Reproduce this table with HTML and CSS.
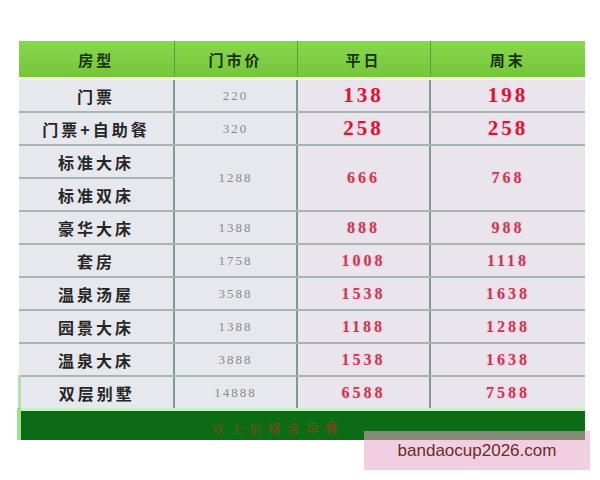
FILE: index.html
```html
<!DOCTYPE html>
<html lang="zh">
<head>
<meta charset="utf-8">
<title>价格表</title>
<link rel="stylesheet" href="styles.css">
</head>
<body>
<div class="page">
  <table class="price">
    <colgroup>
      <col class="c1"><col class="c2"><col class="c3"><col class="c4">
    </colgroup>
    <thead>
      <tr><th>房型</th><th>门市价</th><th>平日</th><th>周末</th></tr>
    </thead>
    <tbody>
      <tr><td class="name">门票</td><td class="rack">220</td><td class="p big">138</td><td class="p big">198</td></tr>
      <tr><td class="name">门票+自助餐</td><td class="rack">320</td><td class="p big">258</td><td class="p big">258</td></tr>
      <tr><td class="name">标准大床</td><td class="rack" rowspan="2">1288</td><td class="p" rowspan="2">666</td><td class="p" rowspan="2">768</td></tr>
      <tr><td class="name">标准双床</td></tr>
      <tr><td class="name">豪华大床</td><td class="rack">1388</td><td class="p">888</td><td class="p">988</td></tr>
      <tr><td class="name">套房</td><td class="rack">1758</td><td class="p">1008</td><td class="p">1118</td></tr>
      <tr><td class="name">温泉汤屋</td><td class="rack">3588</td><td class="p">1538</td><td class="p">1638</td></tr>
      <tr><td class="name">园景大床</td><td class="rack">1388</td><td class="p">1188</td><td class="p">1288</td></tr>
      <tr><td class="name">温泉大床</td><td class="rack">3888</td><td class="p">1538</td><td class="p">1638</td></tr>
      <tr class="last"><td class="name">双层别墅</td><td class="rack">14888</td><td class="p">6588</td><td class="p">7588</td></tr>
    </tbody>
    <tfoot>
      <tr><td colspan="4" class="foot"><span class="note">以上价格含早餐</span></td></tr>
    </tfoot>
  </table>
  <div class="mark">bandaocup2026.com</div>
</div>
</body>
</html>
```

FILE: styles.css
```css
html, body {
  margin: 0;
  padding: 0;
  background: #ffffff;
}
.page {
  position: relative;
  width: 600px;
  height: 480px;
  padding: 41px 0 0 17px;
  box-sizing: border-box;
  font-family: "Noto Sans CJK SC", "Liberation Sans", sans-serif;
}
.price {
  border-collapse: collapse;
  table-layout: fixed;
  width: 566px;
}
.c1 { width: 155px; }
.c2 { width: 123px; }
.c3 { width: 133px; }
.c4 { width: 155px; }
.price th {
  height: 36px;
  padding: 0;
  background: linear-gradient(#8ad64e, #74c63a);
  color: #183212;
  font-size: 15px;
  font-weight: 700;
  letter-spacing: 3px;
  border-left: 1px solid #5f9a48;
  border-bottom: 3px solid #eef3ea;
  text-align: center;
}
.price th:first-child { border-left: none; }
.price td {
  height: 31px;
  padding: 0;
  background: #e7e7ee;
  text-align: center;
  border-bottom: 2px solid #a6b6ac;
  border-left: 2px solid #7f9b89;
}
.price td:first-child {
  border-left: none;
}
.price tr.last td:first-child {
  border-left: 3px solid #b9dcb0;
}
.price td.name {
  color: #262626;
  font-size: 16px;
  font-weight: 700;
  letter-spacing: 3px;
}
.price td.rack {
  color: #8a8a8a;
  font-family: "Liberation Serif", serif;
  font-size: 13px;
  letter-spacing: 2px;
}
.price td.p {
  background: #eae5ed;
  color: #c23a58;
  font-family: "Liberation Serif", serif;
  font-weight: 700;
  font-size: 16px;
  letter-spacing: 3px;
  text-shadow: 0 0 3px #f6b8c8;
}
.price td.p.big {
  font-size: 21px;
  letter-spacing: 3px;
  color: #c81e3e;
}
.price td.foot {
  height: 29px;
  background: #0b6c15;
  border-top: 3px solid #c8efc0;
  border-left: 4px solid #9ee08e;
  border-bottom: none;
  text-align: left;
  padding-left: 190px;
}
.note {
  color: #a4401c;
  font-size: 13px;
  letter-spacing: 6px;
  opacity: 0.7;
}
.mark {
  position: absolute;
  left: 364px;
  top: 431px;
  width: 226px;
  height: 39px;
  background: rgba(231, 168, 199, 0.55);
  color: #6a2c2c;
  font-family: "Liberation Sans", Arial, sans-serif;
  font-size: 17px;
  line-height: 39px;
  text-align: center;
}
```
